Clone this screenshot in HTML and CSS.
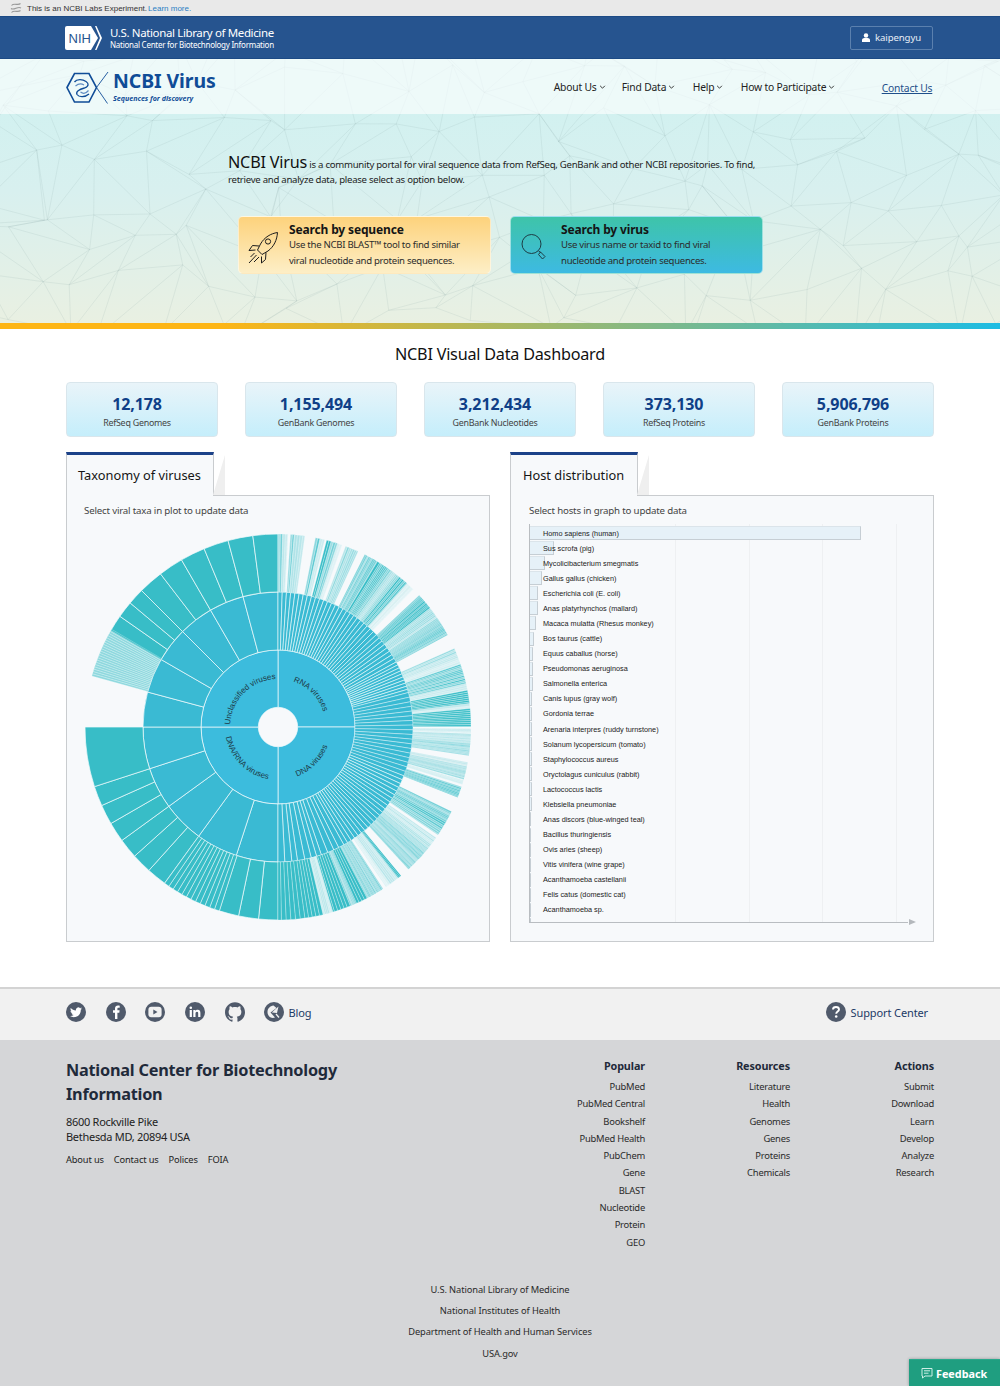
FILE: index.html
```html
<!DOCTYPE html>
<html lang="en">
<head>
<meta charset="utf-8">
<title>NCBI Virus</title>
<link rel="stylesheet" href="styles.css">
</head>
<body>
<div class="labs-bar">
  <svg class="labs-icon" viewBox="0 0 12 12" width="12" height="12"><path d="M1.500 3.500C4 .5 8 4 10.500 1.500M1 6.500C4 9 8 3.500 11 6M1.500 10.500C4 7.500 8 11 10.500 8.500" fill="none" stroke="#9a9a9a" stroke-width="1.100"/></svg>
  <span>This is an NCBI Labs Experiment.</span> <a class="labs-link">Learn more.</a>
</div>
<div class="nih-bar">
  <div class="container nih-inner">
    <div class="nih-brand">
      <svg class="nih-logo" viewBox="0 0 37 24" width="37" height="24">
        <path d="M2 0H26L33 12 26 24H2a2 2 0 0 1-2-2V2a2 2 0 0 1 2-2Z" fill="#fff"/>
        <path d="M30 0H31.500L37 12 31.500 24H30L35 12Z" fill="#fff"/>
        <text x="3.500" y="17" class="nih-mark">NIH</text>
      </svg>
      <div class="nih-text">
        <div class="nih-title">U.S. National Library of Medicine</div>
        <div class="nih-sub">National Center for Biotechnology Information</div>
      </div>
    </div>
    <div class="user-btn">
      <svg viewBox="0 0 10 11" width="8" height="9"><circle cx="5" cy="3" r="2.800" fill="#fff"/><path d="M0 11V8.500C0 7 1.500 6 3 6H7C8.500 6 10 7 10 8.500V11Z" fill="#fff"/></svg>
      <span>kaipengyu</span>
    </div>
  </div>
</div>

<div class="masthead">
  <svg class="mesh" id="mesh" width="1000" height="265" viewBox="0 0 1000 265" aria-hidden="true"></svg>
  <header class="site-nav">
    <div class="container nav-inner">
      <div class="brand">
        <svg class="brand-icon" viewBox="0 0 44 34" width="44" height="34">
          <path d="M1 15.500 8.500 1.500H23L30.500 15.500 23 30H8.500Z" fill="none" stroke="#0f4c97" stroke-width="1.600"/>
          <path d="M30.500 15.500 42 0M30.500 15.500 41.500 31.500" fill="none" stroke="#0f4c97" stroke-width=".9"/>
          <path d="M8.500 10C11 6.500 17 7.500 20 9.500 23 11.500 23 14.500 18.500 16 13 17.500 9.500 19.500 11 22.500 13 25.500 19 25.500 23 22" fill="none" stroke="#0f4c97" stroke-width="1.300"/>
          <path d="M9.500 14C12.500 11.500 15.500 11.500 18 13M14.500 20C17 22 20 21.500 22.500 18.500" fill="none" stroke="#5f8cc2" stroke-width="1.200"/>
        </svg>
        <div class="brand-text">
          <div class="brand-name">NCBI Virus</div>
          <div class="brand-tag">Sequences for discovery</div>
        </div>
      </div>
      <nav class="nav-links">
        <a class="nav-item nav-about">About Us<svg class="chev" viewBox="0 0 8 5" width="7" height="4"><path d="M1 1 4 4 7 1" fill="none" stroke="#222" stroke-width="1.100"/></svg></a>
        <a class="nav-item nav-find">Find Data<svg class="chev" viewBox="0 0 8 5" width="7" height="4"><path d="M1 1 4 4 7 1" fill="none" stroke="#222" stroke-width="1.100"/></svg></a>
        <a class="nav-item nav-help">Help<svg class="chev" viewBox="0 0 8 5" width="7" height="4"><path d="M1 1 4 4 7 1" fill="none" stroke="#222" stroke-width="1.100"/></svg></a>
        <a class="nav-item nav-how">How to Participate<svg class="chev" viewBox="0 0 8 5" width="7" height="4"><path d="M1 1 4 4 7 1" fill="none" stroke="#222" stroke-width="1.100"/></svg></a>
        <a class="nav-contact">Contact Us</a>
      </nav>
    </div>
  </header>
  <section class="hero">
    <p class="hero-intro"><span class="hero-name">NCBI Virus</span> is a community portal for viral sequence data from RefSeq, GenBank and other NCBI repositories. To find, retrieve and analyze data, please select as option below.</p>
    <div class="hero-cards">
      <div class="search-card card-seq">
        <svg class="card-icon" viewBox="0 0 32 34" width="32" height="34" fill="none" stroke="#1d1d1d" stroke-width="1">
          <path d="M29.500 1.500C23 2.500 16.500 6 12.500 13L9.500 19 14 23.500 20 20C26 15.500 29 9 29.500 1.500Z"/>
          <circle cx="20" cy="10.500" r="2.600"/>
          <path d="M11 15 4.500 14.500 1 19.500 7.500 19M18 21.500 17.500 28.500 13.500 32 13.500 25.500M8.500 24 1 32M11 26 6 31M6.500 22 2.500 26"/>
        </svg>
        <div class="card-copy">
          <div class="card-title">Search by sequence</div>
          <div class="card-text">Use the NCBI BLAST™ tool to find similar<br>viral nucleotide and protein sequences.</div>
        </div>
      </div>
      <div class="search-card card-virus">
        <svg class="card-icon" viewBox="0 0 32 34" width="32" height="34" fill="none" stroke="#1d3c44" stroke-width="1">
          <circle cx="11.500" cy="13" r="9.500"/>
          <path d="M18.500 20 21 21.500M20.500 21 25 25.500 22.500 28 18.500 23.500Z"/>
        </svg>
        <div class="card-copy">
          <div class="card-title">Search by virus</div>
          <div class="card-text">Use virus name or taxid to find viral<br>nucleotide and protein sequences.</div>
        </div>
      </div>
    </div>
  </section>
</div>
<div class="color-rule"></div>

<main class="container dashboard">
  <h2 class="dash-title">NCBI Visual Data Dashboard</h2>
  <div class="stats">
    <div class="stat"><div class="stat-num">12,178</div><div class="stat-label">RefSeq Genomes</div></div>
    <div class="stat"><div class="stat-num">1,155,494</div><div class="stat-label">GenBank Genomes</div></div>
    <div class="stat"><div class="stat-num">3,212,434</div><div class="stat-label">GenBank Nucleotides</div></div>
    <div class="stat"><div class="stat-num">373,130</div><div class="stat-label">RefSeq Proteins</div></div>
    <div class="stat"><div class="stat-num">5,906,796</div><div class="stat-label">GenBank Proteins</div></div>
  </div>
  <div class="panels">
    <section class="panel">
      <h3 class="panel-tab">Taxonomy of viruses</h3>
      <div class="panel-body">
        <p class="panel-note">Select viral taxa in plot to update data</p>
        <svg class="sunburst" id="sunburst" viewBox="-200 -200 400 400" width="400" height="400">
          <g id="sun-arcs"></g>
          <defs>
            <path id="lab-tr" d="M0 -48A48 48 0 0 1 48 0"/>
            <path id="lab-tl" d="M-48 0A48 48 0 0 1 0 -48"/>
            <path id="lab-br" d="M0 53A53 53 0 0 0 53 0"/>
            <path id="lab-bl" d="M-53 0A53 53 0 0 0 0 53"/>
          </defs>
          <text class="sun-label"><textPath href="#lab-tr" startOffset="50%">RNA viruses</textPath></text>
          <text class="sun-label"><textPath href="#lab-tl" startOffset="50%">Unclassified viruses</textPath></text>
          <text class="sun-label"><textPath href="#lab-br" startOffset="50%">DNA viruses</textPath></text>
          <text class="sun-label"><textPath href="#lab-bl" startOffset="50%">DNA/RNA viruses</textPath></text>
        </svg>
      </div>
    </section>
    <section class="panel">
      <h3 class="panel-tab panel-tab-host">Host distribution</h3>
      <div class="panel-body">
        <p class="panel-note panel-note-host">Select hosts in graph to update data</p>
        <div class="host-chart">
          <div class="host-grid"><i></i><i></i><i></i><i></i></div>
          <div class="host-rows">
            <div class="host-row"><b class="bar" style="width:331px"></b><span>Homo sapiens (human)</span></div>
            <div class="host-row"><b class="bar" style="width:24px"></b><span>Sus scrofa (pig)</span></div>
            <div class="host-row"><b class="bar" style="width:15px"></b><span>Mycolicibacterium smegmatis</span></div>
            <div class="host-row"><b class="bar" style="width:12px"></b><span>Gallus gallus (chicken)</span></div>
            <div class="host-row"><b class="bar" style="width:8px"></b><span>Escherichia coli (E. coli)</span></div>
            <div class="host-row"><b class="bar" style="width:8px"></b><span>Anas platyrhynchos (mallard)</span></div>
            <div class="host-row"><b class="bar" style="width:6px"></b><span>Macaca mulatta (Rhesus monkey)</span></div>
            <div class="host-row"><b class="bar" style="width:4px"></b><span>Bos taurus (cattle)</span></div>
            <div class="host-row"><b class="bar" style="width:3px"></b><span>Equus caballus (horse)</span></div>
            <div class="host-row"><b class="bar" style="width:3px"></b><span>Pseudomonas aeruginosa</span></div>
            <div class="host-row"><b class="bar" style="width:3px"></b><span>Salmonella enterica</span></div>
            <div class="host-row"><b class="bar" style="width:2px"></b><span>Canis lupus (gray wolf)</span></div>
            <div class="host-row"><b class="bar" style="width:2px"></b><span>Gordonia terrae</span></div>
            <div class="host-row"><b class="bar" style="width:2px"></b><span>Arenaria interpres (ruddy turnstone)</span></div>
            <div class="host-row"><b class="bar" style="width:2px"></b><span>Solanum lycopersicum (tomato)</span></div>
            <div class="host-row"><b class="bar" style="width:2px"></b><span>Staphylococcus aureus</span></div>
            <div class="host-row"><b class="bar" style="width:2px"></b><span>Oryctolagus cuniculus (rabbit)</span></div>
            <div class="host-row"><b class="bar" style="width:2px"></b><span>Lactococcus lactis</span></div>
            <div class="host-row"><b class="bar" style="width:2px"></b><span>Klebsiella pneumoniae</span></div>
            <div class="host-row"><b class="bar" style="width:1px"></b><span>Anas discors (blue-winged teal)</span></div>
            <div class="host-row"><b class="bar" style="width:1px"></b><span>Bacillus thuringiensis</span></div>
            <div class="host-row"><b class="bar" style="width:1px"></b><span>Ovis aries (sheep)</span></div>
            <div class="host-row"><b class="bar" style="width:1px"></b><span>Vitis vinifera (wine grape)</span></div>
            <div class="host-row"><b class="bar" style="width:1px"></b><span>Acanthamoeba castellanii</span></div>
            <div class="host-row"><b class="bar" style="width:1px"></b><span>Felis catus (domestic cat)</span></div>
            <div class="host-row"><b class="bar" style="width:1px"></b><span>Acanthamoeba sp.</span></div>
            <div class="host-row"><b class="bar" style="width:1px"></b><span>Triticum aestivum</span></div>
          </div>
          <svg class="axis-arrow" viewBox="0 0 7 6" width="7" height="6"><path d="M0 0 7 3 0 6Z" fill="#b4b8bc"/></svg>
        </div>
      </div>
    </section>
  </div>
</main>

<footer class="site-footer">
  <div class="social-strip">
    <div class="container social-inner">
      <div class="social-icons">
        <svg class="social" viewBox="0 0 20 20" width="20" height="20"><circle cx="10" cy="10" r="10" fill="#505a6b"/><g transform="translate(4 4.300) scale(.5)"><path fill="#fff" d="M23.953 4.570a10 10 0 01-2.825.775 4.958 4.958 0 002.163-2.723c-.951.555-2.005.959-3.127 1.184a4.920 4.920 0 00-8.384 4.482C7.690 8.095 4.067 6.130 1.640 3.162a4.822 4.822 0 00-.666 2.475c0 1.710.870 3.213 2.188 4.096a4.904 4.904 0 01-2.228-.616v.060a4.923 4.923 0 003.946 4.827 4.996 4.996 0 01-2.212.085 4.936 4.936 0 004.604 3.417 9.867 9.867 0 01-6.102 2.105c-.390 0-.779-.023-1.170-.067a13.995 13.995 0 007.557 2.209c9.053 0 13.998-7.496 13.998-13.985 0-.210 0-.420-.015-.630A9.935 9.935 0 0024 4.590z"/></g></svg>
        <svg class="social" viewBox="0 0 20 20" width="20" height="20"><circle cx="10" cy="10" r="10" fill="#505a6b"/><path fill="#fff" d="M11.400 17V10.700H13.300L13.600 8.300H11.400V6.900C11.400 6.200 11.600 5.800 12.500 5.800H13.700V3.700C13.500 3.700 12.800 3.600 12 3.600 10.200 3.600 9 4.700 9 6.600V8.300H7V10.700H9V17Z"/></svg>
        <svg class="social" viewBox="0 0 20 20" width="20" height="20"><circle cx="10" cy="10" r="10" fill="#505a6b"/><rect x="3.400" y="4.800" width="13.200" height="10.400" rx="3" fill="#f1f1f1"/><path d="M8.300 7.600 12.500 10 8.300 12.400Z" fill="#505a6b"/></svg>
        <svg class="social" viewBox="0 0 20 20" width="20" height="20"><circle cx="10" cy="10" r="10" fill="#505a6b"/><path fill="#fff" d="M4.700 8H6.900V15H4.700ZM5.800 4.500A1.300 1.300 0 1 1 5.800 7.100 1.300 1.300 0 0 1 5.800 4.500ZM8.300 8H10.400V9C10.800 8.300 11.600 7.800 12.700 7.800 14.900 7.800 15.400 9.200 15.400 11.100V15H13.200V11.600C13.200 10.700 13.100 9.700 12 9.700 10.900 9.700 10.500 10.500 10.500 11.600V15H8.300Z"/></svg>
        <svg class="social" viewBox="0 0 24 24" width="20" height="20"><path fill="#505a6b" d="M12 .297c-6.630 0-12 5.373-12 12 0 5.303 3.438 9.800 8.205 11.385.600.113.820-.258.820-.577 0-.285-.010-1.040-.015-2.040-3.338.724-4.042-1.610-4.042-1.610C4.422 18.070 3.633 17.700 3.633 17.700c-1.087-.744.084-.729.084-.729 1.205.084 1.838 1.236 1.838 1.236 1.070 1.835 2.809 1.305 3.495.998.108-.776.417-1.305.760-1.605-2.665-.300-5.466-1.332-5.466-5.930 0-1.310.465-2.380 1.235-3.220-.135-.303-.540-1.523.105-3.176 0 0 1.005-.322 3.300 1.230.960-.267 1.980-.399 3-.405 1.020.006 2.040.138 3 .405 2.280-1.552 3.285-1.230 3.285-1.230.645 1.653.240 2.873.120 3.176.765.840 1.230 1.910 1.230 3.220 0 4.610-2.805 5.625-5.475 5.920.420.360.810 1.096.810 2.220 0 1.606-.015 2.896-.030 3.286 0 .315.210.690.825.570C20.565 22.092 24 17.592 24 12.297c0-6.627-5.373-12-12-12"/></svg>
        <div class="blog-link">
          <svg class="social" viewBox="0 0 20 20" width="20" height="20"><circle cx="10" cy="10" r="10" fill="#505a6b"/><path d="M3.500 10C3.500 6.500 6 4 9.500 3.500L12.500 6 6.500 10.500 11 15.500C7 17 3.500 14 3.500 10Z" fill="#f1f1f1"/><path d="M14.500 4.500 13 11 7.800 10.500Z" fill="#f1f1f1"/><path d="M12 12 15 15.500" stroke="#f1f1f1" stroke-width="1.300"/></svg>
          <span>Blog</span>
        </div>
      </div>
      <div class="support">
        <svg class="social" viewBox="0 0 20 20" width="20" height="20"><circle cx="10" cy="10" r="10" fill="#505a6b"/><path d="M7 7.500C7 5.800 8.400 5 10 5 11.700 5 13 6 13 7.500 13 9.500 10.200 9.500 10.200 11.700" fill="none" stroke="#fff" stroke-width="1.900"/><circle cx="10.200" cy="14.500" r="1.300" fill="#fff"/></svg>
        <span>Support Center</span>
      </div>
    </div>
  </div>
  <div class="footer-main">
    <div class="container footer-top">
      <div class="footer-org">
        <h4 class="org-name">National Center for Biotechnology Information</h4>
        <p class="org-addr">8600 Rockville Pike<br>Bethesda MD, 20894 USA</p>
        <div class="org-links"><a>About us</a><a>Contact us</a><a>Polices</a><a>FOIA</a></div>
      </div>
      <div class="footer-cols">
        <ul class="fcol fcol-popular">
          <li class="fcol-head">Popular</li><li>PubMed</li><li>PubMed Central</li><li>Bookshelf</li><li>PubMed Health</li><li>PubChem</li><li>Gene</li><li>BLAST</li><li>Nucleotide</li><li>Protein</li><li>GEO</li>
        </ul>
        <ul class="fcol fcol-resources">
          <li class="fcol-head">Resources</li><li>Literature</li><li>Health</li><li>Genomes</li><li>Genes</li><li>Proteins</li><li>Chemicals</li>
        </ul>
        <ul class="fcol fcol-actions">
          <li class="fcol-head">Actions</li><li>Submit</li><li>Download</li><li>Learn</li><li>Develop</li><li>Analyze</li><li>Research</li>
        </ul>
      </div>
    </div>
    <div class="footer-center">
      <div>U.S. National Library of Medicine</div>
      <div>National Institutes of Health</div>
      <div>Department of Health and Human Services</div>
      <div>USA.gov</div>
    </div>
  </div>
</footer>
<div class="feedback">
  <svg viewBox="0 0 12 12" width="12" height="12"><path d="M1 1.500H11V9H4L1.500 11V9H1Z" fill="none" stroke="#cfeee6" stroke-width="1"/><path d="M3 3.800H9M3 6.200H7.500" stroke="#cfeee6" stroke-width="1"/></svg>
  <span>Feedback</span>
</div>
<script src="app.js"></script>
</body>
</html>
```
FILE: styles.css
```css
* { box-sizing: border-box; }
html, body { margin: 0; padding: 0; }
body {
  width: 1000px;
  height: 1386px;
  overflow: hidden;
  position: relative;
  background: #fff;
  color: #222;
  font-family: "Noto Sans", "Liberation Sans", sans-serif;
  font-size: 11px;
}
p, h2, h3, h4, ul { margin: 0; padding: 0; }
.container { width: 868px; margin: 0 0 0 66px; }

.labs-bar {
  height: 16px;
  background: #e9e9e9;
  display: flex;
  align-items: center;
  padding-left: 10px;
  font: 8px/15px "Liberation Sans", sans-serif;
  color: #333;
  gap: 1px;
}
.labs-icon { margin-right: 4px; }
.labs-link { color: #2a80c4; }

.nih-bar {
  height: 43px;
  background: #26548f;
  border-top: 1px solid #1c4a85;
  border-bottom: 1px solid #1c4a85;
}
.nih-inner { display: flex; justify-content: space-between; align-items: center; height: 100%; }
.nih-brand { display: flex; align-items: center; gap: 8px; color: #fff; }
.nih-logo { display: block; margin-left: -1px; }
.nih-mark { font: 400 13px "Liberation Sans", sans-serif; fill: #26548f; }
.nih-title { font-size: 11.500px; line-height: 14px; letter-spacing: -.37px; }
.nih-sub { font-size: 8px; line-height: 10px; letter-spacing: -.26px; }
.user-btn {
  width: 83px;
  height: 24px;
  margin-right: 1px;
  border: 1px solid #5b80ae;
  border-radius: 2px;
  color: #e8eef6;
  display: flex;
  align-items: center;
  justify-content: center;
  gap: 5px;
  font-size: 9.600px;
  letter-spacing: -.1px;
}

.masthead {
  position: relative;
  height: 264px;
  background: linear-gradient(#d2f1f0 20%, #d8f0ef 50%, #e9f0e2 100%);
  overflow: hidden;
}
.mesh { position: absolute; left: 0; top: 0; }
.site-nav { position: relative; height: 55px; background: rgba(255,255,255,.62); }
.nav-inner { display: flex; height: 100%; position: relative; }
.brand { display: flex; align-items: flex-start; padding-top: 13px; }
.brand-icon { display: block; flex: none; }
.brand-text { margin-left: 3px; margin-top: -1px; }
.brand-name { font-weight: 700; font-size: 19.500px; line-height: 20px; color: #0f4c97; letter-spacing: -.1px; }
.brand-tag { font-weight: 700; font-style: italic; font-size: 7.100px; line-height: 10px; margin-top: 2px; color: #0f4c97; }
.nav-links { display: flex; align-items: center; margin-left: 338px; flex: 1; height: 100%; }
.nav-item { font-size: 10.300px; letter-spacing: -.18px; color: #222; display: flex; align-items: center; gap: 2px; white-space: nowrap; }
.nav-about { width: 68px; }
.nav-find { width: 71px; }
.nav-help { width: 48px; }
.nav-how { width: 141px; }
.nav-contact { font-size: 10.300px; letter-spacing: -.18px; color: #1f4f8a; text-decoration: underline; padding-top: 2px; }
.chev { flex: none; margin-top: 1px; }

.hero { position: relative; padding: 41px 0 0 228px; }
.hero-intro { width: 535px; font-size: 9.600px; line-height: 15px; letter-spacing: -.27px; color: #1d1d1d; }
.hero-name { font-size: 16.200px; line-height: 15px; letter-spacing: -.2px; color: #111; }
.hero-cards { display: flex; gap: 19px; margin: 29px 0 0 10px; }
.search-card { width: 253px; height: 58px; border-radius: 5px; display: flex; padding: 6px 0 0 9px; border: 1px solid rgba(255,255,255,.5); }
.card-seq { background: linear-gradient(#fdd27c, #fdeec6); }
.card-virus { background: linear-gradient(#3ec4a9, #3dbae2); }
.card-icon { flex: none; margin-top: 8px; }
.card-copy { margin-left: 9px; }
.card-title { font-weight: 700; font-size: 12px; line-height: 14px; letter-spacing: -.15px; color: #151515; }
.card-text { font-size: 9.600px; line-height: 15.600px; letter-spacing: -.29px; color: #2c2c2c; }

.color-rule { height: 6px; background: linear-gradient(90deg, #fdb515 22%, #1dbce3 100%); }

.dashboard { display: block; }
.dash-title { font-weight: 400; font-size: 16.200px; line-height: 24px; text-align: center; padding-top: 13px; height: 53px; letter-spacing: -.22px; color: #111; }
.stats { display: flex; justify-content: space-between; }
.stat {
  width: 152px;
  height: 55px;
  border: 1px solid #d9e6ec;
  border-radius: 4px;
  background: linear-gradient(#e9f4f9, #c5eefb);
  text-align: center;
  padding: 11px 10px 0 0;
}
.stat-num { font-weight: 700; font-size: 16px; line-height: 20px; color: #0f3f87; letter-spacing: -.1px; }
.stat-label { font-size: 8.900px; line-height: 15px; margin-top: 1px; color: #444; letter-spacing: -.24px; }

.panels { display: flex; justify-content: space-between; margin-top: 15px; }
.panel { width: 424px; }
.panel-tab {
  position: relative;
  width: 148px;
  height: 44px;
  margin-bottom: -1px;
  background: #f7f9fb;
  border-top: 3px solid #1c4289;
  border-left: 1px solid #c9cccf;
  border-right: 1px solid #c9cccf;
  font-weight: 400;
  font-size: 12.800px;
  line-height: 40px;
  padding-left: 11px;
  color: #151515;
  z-index: 1;
}
.panel-tab-host { width: 128px; padding-left: 12px; }
.panel-tab::after {
  content: "";
  position: absolute;
  left: 100%;
  top: 0;
  border-left: 12px solid transparent;
  border-bottom: 40px solid #efefef;
}
.panel-body {
  height: 447px;
  background: #f7f9fb;
  border: 1px solid #c9cccf;
  padding-top: 7px;
}
.panel-note { font-size: 9.700px; line-height: 15px; padding-left: 17px; letter-spacing: -.18px; color: #444; }
.panel-note-host { padding-left: 18px; }
.sunburst { display: block; margin: 9px auto 0; overflow: visible; }
.sun-label { font: 8px "Liberation Sans", sans-serif; fill: #1c3946; text-anchor: middle; }

.host-chart {
  position: relative;
  width: 386px;
  height: 399px;
  margin: 6px 0 0 18px;
}
.host-grid { position: absolute; inset: 0; display: flex; padding-left: 74px; }
.host-grid i { display: block; width: 73.400px; flex: none; border-right: 1px solid #eef0f2; }
.host-rows {
  position: relative;
  width: 379px;
  height: 399px;
  padding-top: 1.500px;
  overflow: hidden;
  border-left: 1px solid #b9bdc1;
  border-bottom: 1px solid #b9bdc1;
}
.host-row { position: relative; height: 15.080px; font: 7.300px/15px "Liberation Sans", sans-serif; color: #222; white-space: nowrap; }
.host-row span { position: absolute; left: 13px; top: 0; }
.bar { display: block; position: absolute; left: 0; top: .5px; height: 14px; background: #e6f1f8; border-right: 1px solid #c6ced4; border-bottom: 1px solid #c6ced4; border-top: 1px solid #dbe4ea; }
.axis-arrow { position: absolute; left: 380px; bottom: -2px; }

.site-footer { margin-top: 45px; }
.social-strip { height: 53px; background: #f1f1f1; border-top: 2px solid #d3d3d3; }
.social-inner { display: flex; justify-content: space-between; align-items: center; height: 100%; padding-bottom: 5px; }
.social-icons { display: flex; align-items: center; gap: 19.700px; }
.social { display: block; flex: none; }
.blog-link { display: flex; align-items: center; gap: 4px; font-size: 11px; letter-spacing: -.1px; color: #1c3a66; }
.support { display: flex; align-items: center; gap: 5px; margin-right: 6px; font-size: 11px; letter-spacing: -.12px; color: #1c3a66; }

.footer-main { height: 346px; background: #d5d6d8; color: #222; }
.footer-top { display: flex; justify-content: space-between; height: 239px; }
.footer-org { width: 300px; padding-top: 18px; }
.org-name { font-size: 16.300px; line-height: 24px; font-weight: 700; color: #1f2a3a; letter-spacing: -.23px; }
.org-addr { margin-top: 8px; font-size: 11px; line-height: 15px; letter-spacing: -.29px; }
.org-links { display: flex; gap: 10px; margin-top: 8px; font-size: 9.300px; line-height: 15px; letter-spacing: -.15px; }
.footer-cols { display: flex; padding-top: 17px; }
.fcol { list-style: none; text-align: right; font-size: 9.400px; line-height: 17.300px; letter-spacing: -.22px; color: #2a2a2a; }
.fcol-popular { width: 110px; }
.fcol-resources { margin-left: 85px; width: 60px; }
.fcol-actions { margin-left: 84px; width: 60px; }
.fcol-head { font-weight: 700; font-size: 10.800px; line-height: 17px; letter-spacing: -.1px; color: #1f2a3a; margin-bottom: 4px; }
.footer-center { text-align: center; font-size: 9.300px; line-height: 21.200px; letter-spacing: -.1px; color: #2a2a2a; }

.feedback {
  position: absolute;
  right: 0;
  bottom: 0;
  width: 91px;
  height: 27px;
  background: #1f9e80;
  border-top: 1px solid #2aa98c;
  box-shadow: 0 0 3px rgba(0,0,0,.3);
  color: #fff;
  font-weight: 700;
  font-size: 10.800px;
  display: flex;
  align-items: center;
  gap: 3px;
  padding-left: 12px;
}
```
FILE: app.js
```js
(function () {
  var NS = 'http://www.w3.org/2000/svg';
  var seed = 41;
  function rnd() { seed = (seed * 16807) % 2147483647; return seed / 2147483647; }

  /* background polygon mesh */
  var mesh = document.getElementById('mesh');
  var pts = [], cols = 24, rows = 8, cw = 46, ch = 40;
  for (var r = 0; r < rows; r++) {
    pts[r] = [];
    for (var c = 0; c < cols; c++) {
      pts[r][c] = [(c - .5) * cw + (rnd() - .5) * cw * .95, (r - .4) * ch + (rnd() - .5) * ch * .95];
    }
  }
  var d = '';
  function seg(a, b) { d += 'M' + a[0].toFixed(1) + ' ' + a[1].toFixed(1) + 'L' + b[0].toFixed(1) + ' ' + b[1].toFixed(1); }
  for (r = 0; r < rows; r++) {
    for (c = 0; c < cols; c++) {
      if (c < cols - 1) seg(pts[r][c], pts[r][c + 1]);
      if (r < rows - 1) seg(pts[r][c], pts[r + 1][c]);
      if (r < rows - 1 && c < cols - 1) {
        if (rnd() > .5) seg(pts[r][c], pts[r + 1][c + 1]); else seg(pts[r + 1][c], pts[r][c + 1]);
      }
    }
  }
  var mp = document.createElementNS(NS, 'path');
  mp.setAttribute('d', d);
  mp.setAttribute('fill', 'none');
  mp.setAttribute('stroke', '#7f9a9c');
  mp.setAttribute('stroke-opacity', '.17');
  mp.setAttribute('stroke-width', '.8');
  mesh.appendChild(mp);

  /* sunburst */
  var g = document.getElementById('sun-arcs');
  var BG = '#f2fbfc';
  function pol(rad, deg) { var t = (deg - 90) * Math.PI / 180; return (rad * Math.cos(t)).toFixed(2) + ' ' + (rad * Math.sin(t)).toFixed(2); }
  function arc(r0, r1, a, b, fill, op, sw) {
    var p = document.createElementNS(NS, 'path');
    var big = b - a > 180 ? 1 : 0;
    p.setAttribute('d', 'M' + pol(r0, a) + 'L' + pol(r1, a) + 'A' + r1 + ' ' + r1 + ' 0 ' + big + ' 1 ' + pol(r1, b) + 'L' + pol(r0, b) + 'A' + r0 + ' ' + r0 + ' 0 ' + big + ' 0 ' + pol(r0, a) + 'Z');
    p.setAttribute('fill', fill);
    if (op !== undefined && op < 1) p.setAttribute('fill-opacity', op);
    p.setAttribute('stroke', BG);
    p.setAttribute('stroke-width', sw === undefined ? .7 : sw);
    g.appendChild(p);
  }
  var C1 = '#3cbcdd', C2 = '#3abad3', C3 = '#38bdc7';
  var R0 = 19.7, R1 = 77, R2 = 135, R3 = 193;

  [0, 90, 180, 270].forEach(function (a) { arc(R0, R1, a, a + 90, C1); });

  /* second ring: named wedges on the left, fine stripes on the right */
  var a;
  for (a = 180; a < 270; a += 18) arc(R1, R2, a, a + 18, C2);
  for (a = 270; a < 360; a += 15) arc(R1, R2, a, a + 15, C2);
  a = 0;
  while (a < 180) {
    var step = a < 60 ? 1.8 : a < 75 ? 1.4 : a < 110 ? 2 : a < 150 ? 1.8 : 2 + rnd() * 1.2;
    var e = Math.min(a + step, 180);
    arc(R1, R2, a, e, C2, 1, a < 75 || a > 110 ? .6 : .4);
    a = e;
  }

  /* third ring, left side */
  [[180, 185.8], [185.8, 191.8], [191.8, 197.7], [216, 222], [222, 228], [228, 234], [234, 240], [240, 246], [246, 252], [252, 270],
   [300, 305], [305, 310], [310, 315], [315, 322.5], [322.5, 330], [330, 337.5], [337.5, 345], [345, 352.5], [352.5, 360]]
    .forEach(function (s) { arc(R2, R3, s[0], s[1], C3); });
  for (a = 197.7; a < 215.9; a += 1.52) arc(R2, R3, a, a + 1.52, C3, 1, .5);
  for (a = 285.3; a < 299.9; a += .72) arc(R2, R3, a, a + .72, C3, .55, .3);

  /* third ring, right side: bands of thin stripes [start, end, strength, pitch] */
  var bands = [
    [0, 1.5, .6, .7], [1.5, 3, .25, .7], [3.7, 5, .55, .6], [5, 8, .3, .8], [11.2, 12.7, .6, .7], [12.7, 14, .2, .7],
    [14.6, 16, 1, .7], [16, 18, .55, .7], [18, 19.4, .15, .7], [20.5, 24.5, .45, .6], [26.7, 31, .55, .45], [31, 31.8, 1, .8],
    [31.8, 36, .7, .5], [36, 39, .5, .5], [39, 42, .85, .55], [42, 44.5, .12, .8], [47, 52, .8, .45], [52, 56, .4, .5], [56, 61.5, .65, .4],
    [66, 69, .4, .5], [69, 71, .18, .6], [71, 74, .7, .5], [74, 77, .85, .5], [77, 79, .3, .6], [79, 83, .9, .6], [83, 84.5, .2, .8], [84.5, 90, 1, .6],
    [90.5, 91.8, .2, .4], [92, 95, .35, .35], [95, 97, .5, .3], [97, 98.6, .55, .4], [100.5, 101.8, .2, .4], [101.8, 105.8, .45, .3], [106, 107.3, .15, .4],
    [108, 111.4, .65, .4], [116, 119, .55, .45], [119, 124, .7, .6], [125, 129, .3, .5], [129, 137.5, .55, .3], [140.4, 141.5, 1, .4], [141.5, 144.5, .25, .6], [144.5, 146, .15, .6],
    [147, 152.5, .55, .35], [152.5, 156, .9, .9], [156, 158, .5, .4], [158, 163.5, .95, 1], [163.5, 166.5, .3, .5], [166.5, 172, .95, 1.1], [172, 180, 1, 1.4]
  ];
  bands.forEach(function (b) {
    for (var s = b[0]; s < b[1] - .01; s += b[3]) {
      var t = Math.min(s + b[3], b[1]);
      var o = b[2] >= .9 ? 1 : Math.min(1, b[2] * (.65 + rnd() * .7));
      arc(R2, R3, s, t, C3, o, b[3] < .5 ? .12 : .3);
    }
  });
})();
```
